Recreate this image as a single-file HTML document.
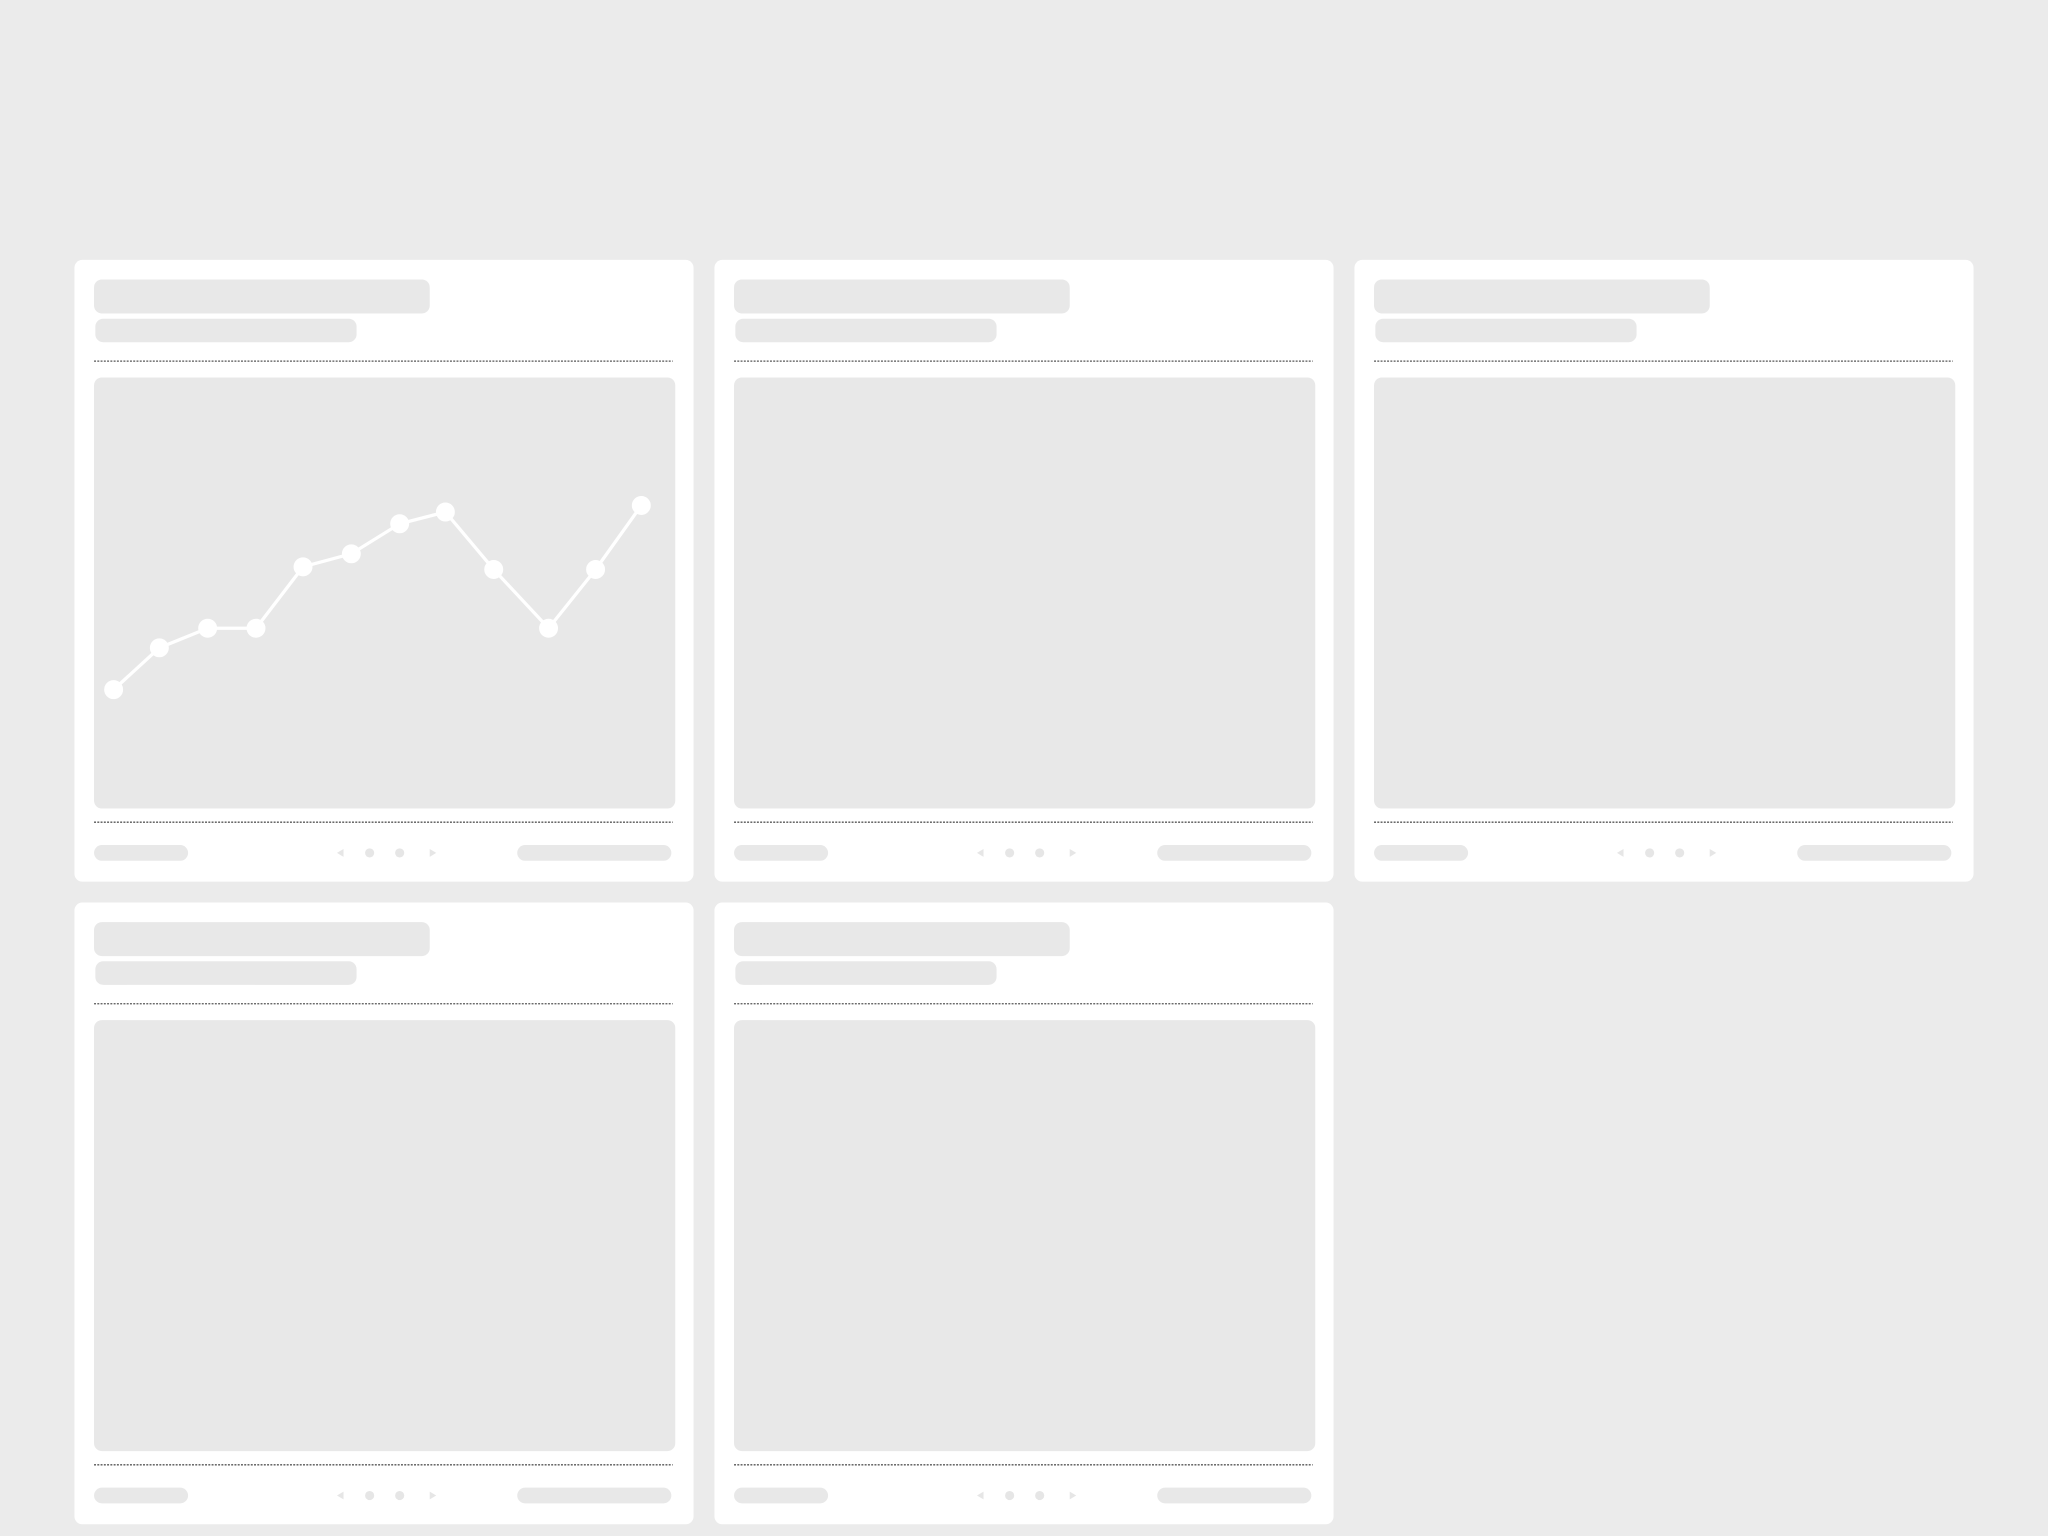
<!DOCTYPE html>
<html><head><meta charset="utf-8"><style>
html,body{margin:0;padding:0;background:#ebebeb;width:2048px;height:1536px;overflow:hidden}
svg{display:block}
</style></head><body>
<svg width="2048" height="1536" viewBox="0 0 1568 1176" xmlns="http://www.w3.org/2000/svg">
<defs>
<g id="card">
  <rect x="0" y="0" width="474" height="476" rx="6" fill="#fff"/>
  <rect x="15" y="15" width="257" height="26" rx="6" fill="#e8e8e8"/>
  <rect x="16" y="45" width="200" height="18" rx="6" fill="#e8e8e8"/>
  <line x1="15" y1="77.5" x2="458" y2="77.5" stroke="#555" stroke-width="1" stroke-dasharray="1.5,1"/>
  <rect x="15" y="90" width="445" height="330" rx="6" fill="#e8e8e8"/>
  <line x1="15" y1="430.5" x2="458" y2="430.5" stroke="#555" stroke-width="1" stroke-dasharray="1.5,1"/>
  <rect x="15" y="448" width="72" height="12" rx="6" fill="#e8e8e8"/>
  <rect x="339" y="448" width="118" height="12" rx="6" fill="#e8e8e8"/>
  <path d="M206,451 L201,454 L206,457 Z" fill="#e6e6e6"/>
  <ellipse cx="226" cy="454" rx="3.5" ry="3.5" fill="#e6e6e6"/>
  <ellipse cx="249" cy="454" rx="3.5" ry="3.5" fill="#e6e6e6"/>
  <path d="M272,451 L277,454 L272,457 Z" fill="#e6e6e6"/>
</g>
</defs>
<use href="#card" x="57" y="199"/>
<use href="#card" x="547" y="199"/>
<use href="#card" x="1037" y="199"/>
<use href="#card" x="57" y="691"/>
<use href="#card" x="547" y="691"/>
<g fill="#fff" stroke="#fff" stroke-width="2.5">
<polyline fill="none" points="87,528 122,496 159,481 196,481 232,434 269,424 306,401 341,392 378,436 420,481 456,436 491,387"/>
<circle cx="87" cy="528" r="6"/><circle cx="122" cy="496" r="6"/><circle cx="159" cy="481" r="6"/>
<circle cx="196" cy="481" r="6"/><circle cx="232" cy="434" r="6"/><circle cx="269" cy="424" r="6"/>
<circle cx="306" cy="401" r="6"/><circle cx="341" cy="392" r="6"/><circle cx="378" cy="436" r="6"/>
<circle cx="420" cy="481" r="6"/><circle cx="456" cy="436" r="6"/><circle cx="491" cy="387" r="6"/>
</g>
</svg>
</body></html>
